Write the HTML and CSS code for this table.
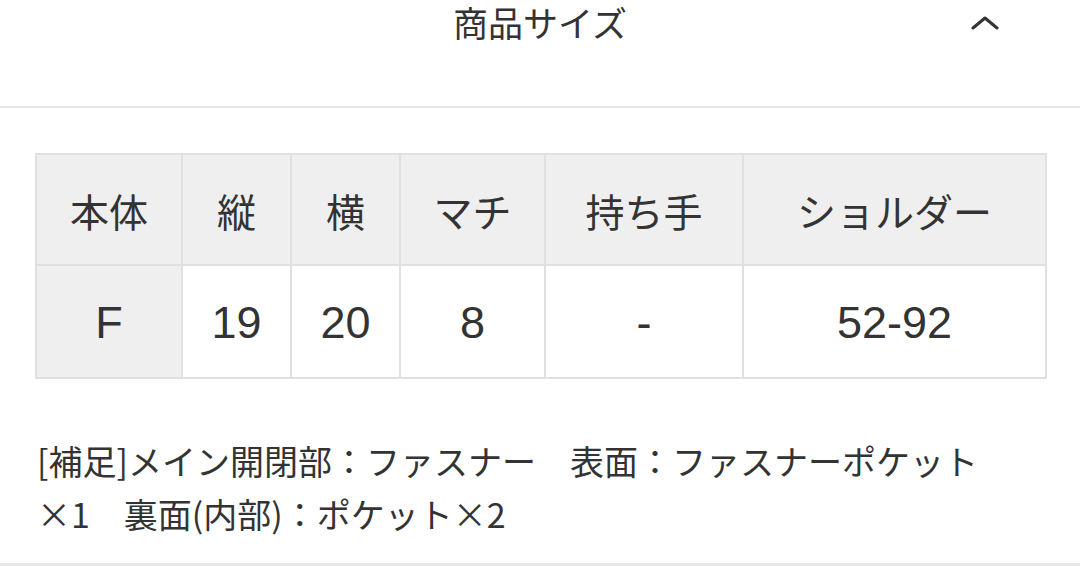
FILE: index.html
```html
<!DOCTYPE html>
<html lang="ja">
<head>
<meta charset="utf-8">
<link rel="stylesheet" href="styles.css">
</head>
<body>
<div class="section-head">
  <span></span>
  <h2 class="title">商品サイズ</h2>
  <span class="toggle">
    <svg width="28" height="16" viewBox="0 0 28 16"><path d="M2 13 L14 3 L26 13" fill="none" stroke="#333" stroke-width="3" stroke-linecap="round" stroke-linejoin="round"/></svg>
  </span>
</div>
<div class="content">
  <table class="size-table">
    <colgroup>
      <col style="width:146px"><col style="width:109px"><col style="width:109px"><col style="width:145px"><col style="width:198px"><col style="width:303px">
    </colgroup>
    <tr class="head-row">
      <th>本体</th><th>縦</th><th>横</th><th>マチ</th><th>持ち手</th><th>ショルダー</th>
    </tr>
    <tr class="data-row">
      <th>F</th><td>19</td><td>20</td><td>8</td><td>-</td><td>52-92</td>
    </tr>
  </table>
  <p class="note">[補足]メイン開閉部：ファスナー　表面：ファスナーポケット<br>×1　裏面(内部)：ポケット×2</p>
</div>
<div class="bottom-line"></div>
</body>
</html>
```

FILE: styles.css
```css
html, body {
  margin: 0;
  padding: 0;
  background: #fff;
}
body {
  width: 1080px;
  height: 566px;
  overflow: hidden;
  color: #333;
  font-family: "Liberation Sans", "Noto Sans CJK JP", sans-serif;
}
.section-head {
  display: grid;
  grid-template-columns: 1fr auto 1fr;
  align-items: start;
  height: 106px;
  border-bottom: 2px solid #e6e6e6;
}
.title {
  margin: 0;
  padding-top: 1px;
  font-weight: normal;
  font-size: 35px;
  line-height: 42px;
  font-family: "Noto Sans CJK JP", sans-serif;
  color: #333;
}
.toggle {
  justify-self: end;
  padding-right: 81px;
  padding-top: 15px;
  line-height: 0;
}
.content {
  padding: 45px 35px 0 35px;
}
.size-table {
  width: 1010px;
  table-layout: fixed;
  border-collapse: collapse;
}
.size-table th, .size-table td {
  border: 2px solid #e0e0e0;
  height: 109px;
  padding: 0;
  text-align: center;
  vertical-align: middle;
  font-weight: normal;
  background: #fff;
}
.size-table th {
  background: #efefef;
}
.size-table .head-row th {
  font-family: "Noto Sans CJK JP", sans-serif;
  font-size: 39px;
}
.size-table .data-row th,
.size-table .data-row td {
  font-size: 45px;
  padding-top: 2px;
}
.note {
  margin: 55px 0 0 2px;
  font-family: "Noto Sans CJK JP", sans-serif;
  font-size: 34px;
  line-height: 53px;
  letter-spacing: 0;
}
.bottom-line {
  position: absolute;
  left: 0;
  top: 563px;
  width: 1080px;
  border-top: 3px solid #e6e6e6;
}
```
